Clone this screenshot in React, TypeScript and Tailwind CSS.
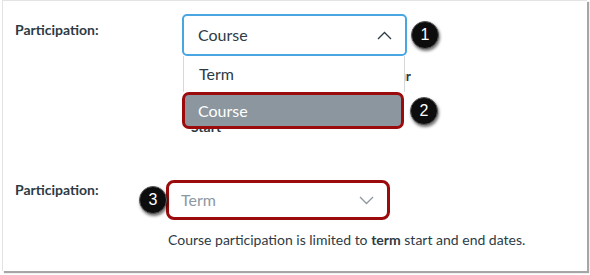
import { ReactNode } from "react";

const font = { fontFamily: "Lato, 'Open Sans', Arial, sans-serif" };

function Badge({ n, className = "" }: { n: string; className?: string }) {
  return (
    <div
      className={`flex h-[28px] w-[28px] items-center justify-center rounded-full border border-[#5a5a5a] bg-[#0d0d0d] text-[16px] leading-none text-white shadow-[1px_2px_3px_rgba(0,0,0,0.55)] ${className}`}
      style={{ fontFamily: "'Liberation Sans', Arial, sans-serif" }}
    >
      {n}
    </div>
  );
}

function Chevron({ up, color }: { up?: boolean; color: string }) {
  return (
    <svg width="15" height="9" viewBox="0 0 15 9" fill="none">
      <polyline
        points={up ? "1,8 7.5,1.5 14,8" : "1,1 7.5,7.5 14,1"}
        stroke={color}
        strokeWidth="1.3"
        strokeLinejoin="miter"
      />
    </svg>
  );
}

function Label({ children, className = "" }: { children: ReactNode; className?: string }) {
  return <div className={`shrink-0 text-[14px] font-bold leading-[20px] text-[#2d3b45] ${className}`}>{children}</div>;
}

export default function App() {
  return (
    <div className="h-[275px] w-[590px] overflow-hidden bg-white" style={font}>
      <div className="ml-[2px] h-[271px] w-[585px] border-l border-t border-[#e3e3e3] bg-white pl-[12px] pt-[13px] shadow-[2px_2px_1px_rgba(0,0,0,0.35)]">
        {/* first participation field, menu open */}
        <div className="flex">
          <Label className="w-[167px] pt-[6px]">Participation:</Label>
          <div className="flex flex-col">
            <div className="flex items-center">
              <div className="relative">
                <div className="flex h-[42px] w-[225px] items-center justify-between rounded-[5px] border-2 border-[#4aa6e3] bg-white pl-[14px] pr-[13px] text-[16px] text-[#2d3b45]">
                  <span>Course</span>
                  <Chevron up color="#2d3b45" />
                </div>
                {/* open menu */}
                <div className="absolute left-[1px] top-full z-10 flex flex-col">
                  <div className="flex h-[36px] w-[222px] items-center border-x border-[#d5d9dc] bg-white pl-[15px] text-[16px] text-[#2d3b45]">
                    Term
                  </div>
                  <div className="flex items-center">
                    <div className="-ml-px flex h-[37px] w-[222px] items-center rounded-[7px] border-[3px] border-[#9b0b0b] bg-[#8b969e] pl-[13px] text-[16px] text-white">
                      Course
                    </div>
                    <Badge n="2" className="ml-[6px]" />
                  </div>
                </div>
              </div>
              <Badge n="1" className="ml-[4px]" />
            </div>
            {/* content under the open menu, only its tail shows */}
            <div className="ml-[222px] mt-[10px] flex w-[7px] justify-end overflow-hidden whitespace-nowrap text-[14px] font-bold leading-[20px] text-[#2d3b45]">
              your
            </div>
            <div className="mt-[31px] pl-[9px] text-[14px] font-bold leading-[20px] text-[#2d3b45]">Start</div>
          </div>
        </div>

        {/* second participation field */}
        <div className="mt-[43px] flex">
          <Label className="w-[151px]">Participation:</Label>
          <div className="flex flex-col">
            <div className="relative">
              <div className="flex h-[40px] w-[224px] items-center justify-between rounded-[8px] border-[3px] border-[#9b0b0b] bg-white pl-[12px] pr-[13px] text-[16px] text-[#8e979f]">
                <span>Term</span>
                <Chevron color="#8e979f" />
              </div>
              <Badge n="3" className="absolute left-[-27px] top-[6px]" />
            </div>
            <div className="mt-[10px] pl-[2px] text-[14px] leading-[20px] text-[#2d3b45]">
              Course participation is limited to <span className="font-bold">term</span> start and end dates.
            </div>
          </div>
        </div>
      </div>
    </div>
  );
}
